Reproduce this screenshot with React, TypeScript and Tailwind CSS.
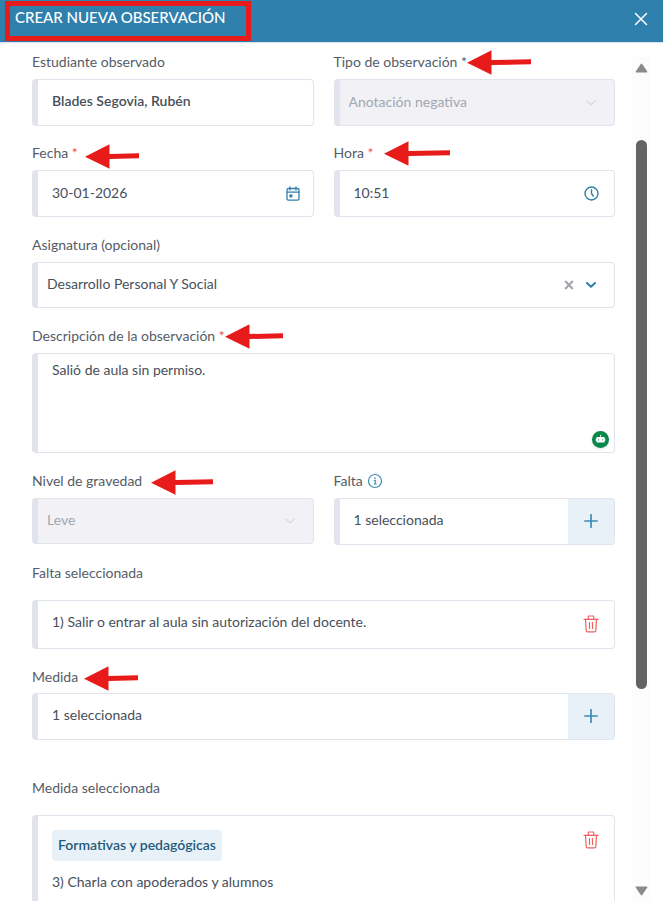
import { ReactNode, useState } from "react";
import clsx from "clsx";

const FIELD =
  "flex items-center overflow-hidden rounded-sm border border-l-[6px] border-[#e1e4ec]";

function Arrow({ length, className }: { length: number; className: string }) {
  return (
    <svg
      aria-hidden="true"
      width={length}
      height="25"
      viewBox={`0 0 ${length} 25`}
      className={clsx("absolute z-10", className)}
      fill="#e81b1b"
    >
      <path
        d={`M0 12.7 L24.5 0.3 V10 L${length} 9.2 V14.2 L24.5 15 V24.7 Z`}
      />
    </svg>
  );
}

function Label({
  htmlFor,
  children,
  required,
  arrow,
}: {
  htmlFor?: string;
  children: ReactNode;
  required?: boolean;
  arrow?: ReactNode;
}) {
  return (
    <div className="relative flex h-5 items-center gap-1">
      <label htmlFor={htmlFor} className="leading-5 text-[#555c68]">
        {children}
        {required && <span className="text-[#f0524f]"> *</span>}
      </label>
      {arrow}
    </div>
  );
}

function Chevron({ className }: { className: string }) {
  return (
    <svg
      aria-hidden="true"
      width="10"
      height="6"
      viewBox="0 0 10 6"
      className={clsx("pointer-events-none shrink-0", className)}
      fill="none"
      stroke="currentColor"
      strokeLinecap="round"
      strokeLinejoin="round"
    >
      <path d="M1 1 L5 4.8 L9 1" />
    </svg>
  );
}

function TrashIcon() {
  return (
    <svg
      aria-hidden="true"
      width="16"
      height="18"
      viewBox="0 0 16 18"
      fill="none"
      stroke="#f0605e"
      strokeWidth="1.2"
      strokeLinecap="round"
      strokeLinejoin="round"
    >
      <path d="M1 4.3 H15 M5.3 4.3 V1.6 Q5.3 1 5.9 1 H10.1 Q10.7 1 10.7 1.6 V4.3" />
      <path d="M2.5 4.3 L3.2 15.7 Q3.3 16.8 4.4 16.8 H11.6 Q12.7 16.8 12.8 15.7 L13.5 4.3" />
      <path d="M6.5 7.5 V13.5 M9.5 7.5 V13.5" />
    </svg>
  );
}

function CalendarIcon() {
  return (
    <svg
      aria-hidden="true"
      width="14"
      height="15"
      viewBox="0 0 14 15"
      fill="none"
      stroke="#2f80ad"
      strokeWidth="1.3"
      strokeLinecap="round"
    >
      <rect x="1" y="2.5" width="12" height="11.6" rx="1.4" />
      <path d="M1 6.2 H13 M4 0.8 V4 M10 0.8 V4" />
      <rect x="3.4" y="8.4" width="3" height="3" fill="#2f80ad" stroke="none" />
    </svg>
  );
}

function ClockIcon() {
  return (
    <svg
      aria-hidden="true"
      width="15"
      height="15"
      viewBox="0 0 15 15"
      fill="none"
      stroke="#2f80ad"
      strokeWidth="1.4"
      strokeLinecap="round"
    >
      <circle cx="7.5" cy="7.5" r="6.5" />
      <path d="M7.5 3.8 V7.5 L9.3 10" />
    </svg>
  );
}

function AddField({ id }: { id: string }) {
  return (
    <div className={clsx(FIELD, "h-[47px]")}>
      <input
        id={id}
        readOnly
        value="1 seleccionada"
        className="h-full min-w-0 flex-1 px-3.5 pb-1 outline-none"
      />
      <button
        type="button"
        aria-label="Agregar"
        className="flex h-full w-[46px] items-center justify-center bg-[#e8f1f7] pb-px"
      >
        <svg width="14" height="14" viewBox="0 0 14 14" stroke="#3e8ab5" strokeWidth="1.7" strokeLinecap="round">
          <path d="M7 0.8 V13.2 M0.8 7 H13.2" />
        </svg>
      </button>
    </div>
  );
}

function DisabledSelect({
  id,
  value,
  className,
}: {
  id: string;
  value: string;
  className: string;
}) {
  return (
    <div className={clsx(FIELD, "bg-[#f1f1f6] pr-[18px]", className)}>
      <select
        id={id}
        disabled
        className="h-full min-w-0 flex-1 appearance-none pb-0.5 pl-[9px] text-[#a3a7ae] opacity-100"
      >
        <option>{value}</option>
      </select>
      <Chevron className="text-[#dadee3] stroke-[1.6]" />
    </div>
  );
}

function Scrollbar() {
  return (
    <div aria-hidden="true" className="flex w-[19px] flex-col items-center bg-[#fcfcfc] pt-1.5 pb-[5px]">
      <svg width="13" height="10" viewBox="0 0 13 10" fill="#8a8a8a">
        <path d="M6.5 0.6 Q7 0.6 7.4 1.2 L12.3 8.4 Q12.8 9.5 11.6 9.6 H1.4 Q0.2 9.5 0.7 8.4 L5.6 1.2 Q6 0.6 6.5 0.6Z" />
      </svg>
      <div className="flex-[67]" />
      <div className="w-[11px] flex-[549] rounded-full bg-[#636363]" />
      <div className="flex-[197]" />
      <svg width="13" height="10" viewBox="0 0 13 10" fill="#8a8a8a">
        <path d="M6.5 9.4 Q6 9.4 5.6 8.8 L0.7 1.6 Q0.2 0.5 1.4 0.4 H11.6 Q12.8 0.5 12.3 1.6 L7.4 8.8 Q7 9.4 6.5 9.4Z" />
      </svg>
    </div>
  );
}

export default function App() {
  const [date, setDate] = useState("30-01-2026");
  const [time, setTime] = useState("10:51");
  const [description, setDescription] = useState("Salió de aula sin permiso.");

  return (
    <div className="flex h-screen flex-col overflow-hidden bg-white pb-[11px] font-['Lato',sans-serif] text-sm text-[#484f5b]">
      <header className="relative flex h-[43px] shrink-0 items-center justify-between border-b border-[#d5e3f0] bg-[#2f80ad] px-[15px] text-white">
        <h1 className="pb-2 text-[15px] leading-5 font-medium">
          CREAR NUEVA OBSERVACIÓN
        </h1>
        <div className="absolute top-px left-[5px] h-10 w-[246px] border-[5px] border-[#e81b1b]" />
        <button type="button" aria-label="Cerrar" className="pb-1">
          <svg width="14" height="14" viewBox="0 0 14 14" stroke="white" strokeWidth="1.5" strokeLinecap="round">
            <path d="M1.5 1.5 L12.5 12.5 M12.5 1.5 L1.5 12.5" />
          </svg>
        </button>
      </header>

      <div className="flex min-h-0 flex-1">
        <form className="flex min-w-0 flex-1 flex-col gap-[18px] overflow-hidden pt-[9px] pr-[17px] pl-8">
          <div className="grid shrink-0 grid-cols-2 gap-x-5 gap-y-[17px]">
            <div className="flex flex-col gap-[7px]">
              <Label htmlFor="student">Estudiante observado</Label>
              <div className={clsx(FIELD, "h-[47px]")}>
                <input
                  id="student"
                  readOnly
                  value="Blades Segovia, Rubén"
                  className="h-full min-w-0 flex-1 px-3.5 pb-1 font-semibold outline-none"
                />
              </div>
            </div>
            <div className="flex flex-col gap-[7px]">
              <Label
                htmlFor="type"
                arrow={<Arrow length={64} className="-top-0.5 left-[133px]" />}
              >
                Tipo de observación *
              </Label>
              <DisabledSelect id="type" value="Anotación negativa" className="h-[47px]" />
            </div>

            <div className="flex flex-col gap-[7px]">
              <Label
                htmlFor="date"
                required
                arrow={<Arrow length={54} className="top-px left-[53px]" />}
              >
                Fecha
              </Label>
              <div className={clsx(FIELD, "h-[47px] pr-[13px]")}>
                <input
                  id="date"
                  value={date}
                  onChange={(e) => setDate(e.target.value)}
                  className="h-full min-w-0 flex-1 px-3.5 pb-0.5 outline-none"
                />
                <button type="button" aria-label="Abrir calendario">
                  <CalendarIcon />
                </button>
              </div>
            </div>
            <div className="flex flex-col gap-[7px]">
              <Label
                htmlFor="time"
                required
                arrow={<Arrow length={66} className="-top-0.5 left-[50px]" />}
              >
                Hora
              </Label>
              <div className={clsx(FIELD, "h-[47px] pr-[15px]")}>
                <input
                  id="time"
                  value={time}
                  onChange={(e) => setTime(e.target.value)}
                  className="h-full min-w-0 flex-1 px-3.5 pb-0.5 outline-none"
                />
                <button type="button" aria-label="Elegir hora">
                  <ClockIcon />
                </button>
              </div>
            </div>
          </div>

          <div className="flex shrink-0 flex-col gap-[7px]">
            <Label htmlFor="subject">Asignatura (opcional)</Label>
            <div className={clsx(FIELD, "h-[46px] pr-[18px]")}>
              <select
                id="subject"
                className="h-full min-w-0 flex-1 appearance-none pb-0.5 pl-[9px] outline-none"
              >
                <option>Desarrollo Personal Y Social</option>
              </select>
              <button type="button" aria-label="Quitar asignatura" className="mr-3">
                <svg width="10" height="10" viewBox="0 0 10 10" stroke="#a0a3a9" strokeWidth="2">
                  <path d="M1.2 1 L8.8 9 M8.8 1 L1.2 9" />
                </svg>
              </button>
              <Chevron className="text-[#2f80ad] stroke-2" />
            </div>
          </div>

          <div className="flex shrink-0 flex-col gap-[7px]">
            <Label
              htmlFor="description"
              required
              arrow={<Arrow length={58} className="-top-0.5 left-[193px]" />}
            >
              Descripción de la observación
            </Label>
            <div className={clsx(FIELD, "relative h-[100px]")}>
              <textarea
                id="description"
                value={description}
                onChange={(e) => setDescription(e.target.value)}
                className="h-full min-w-0 flex-1 resize-none px-3.5 pt-1.5 leading-5 outline-none"
              />
              <button
                type="button"
                aria-label="Asistente"
                className="absolute right-[5px] bottom-1 flex size-[17px] items-center justify-center rounded-full bg-[#04894a] shadow-sm"
              >
                <svg width="11" height="11" viewBox="0 0 11 11" fill="white">
                  <path d="M5.1 1.4 L6.4 0.3 V1.3 L5.9 1.7 V3.2 H5.1Z" />
                  <rect x="1.5" y="3" width="8" height="5.6" rx="0.4" />
                  <rect x="0.7" y="4.6" width="9.6" height="2.4" rx="0.4" />
                  <circle cx="3.6" cy="5.8" r="0.6" fill="#04894a" />
                  <circle cx="7.4" cy="5.8" r="0.6" fill="#04894a" />
                </svg>
              </button>
            </div>
          </div>

          <div className="grid shrink-0 grid-cols-2 gap-x-5">
            <div className="flex flex-col gap-[7px]">
              <Label
                htmlFor="severity"
                arrow={<Arrow length={62} className="-top-px left-[119px]" />}
              >
                Nivel de gravedad
              </Label>
              <DisabledSelect id="severity" value="Leve" className="h-[46px]" />
            </div>
            <div className="flex flex-col gap-[7px]">
              <Label
                htmlFor="fault"
                arrow={
                  <svg width="16" height="16" viewBox="0 0 16 16" fill="none" stroke="#3e8ab5" strokeWidth="1.2">
                    <circle cx="8" cy="8" r="6.5" />
                    <path d="M6.8 7.4 H8.2 V11 M6.8 11 H9.5" />
                    <circle cx="8" cy="5.1" r="0.8" fill="#3e8ab5" stroke="none" />
                  </svg>
                }
              >
                Falta
              </Label>
              <AddField id="fault" />
            </div>
          </div>

          <div className="flex shrink-0 flex-col gap-[17px]">
            <h2 className="leading-5 text-[#555c68]">Falta seleccionada</h2>
            <div className={clsx(FIELD, "h-[49px] justify-between pr-[15px] pb-0.5 pl-3.5")}>
              <p className="pb-1">
                1) Salir o entrar al aula sin autorización del docente.
              </p>
              <button type="button" aria-label="Eliminar falta">
                <TrashIcon />
              </button>
            </div>
          </div>

          <div className="flex shrink-0 flex-col gap-1.5">
            <Label
              htmlFor="measure"
              arrow={<Arrow length={54} className="-top-px left-[52px]" />}
            >
              Medida
            </Label>
            <AddField id="measure" />
          </div>

          <div className="flex shrink-0 flex-col gap-[17px] pt-5">
            <h2 className="leading-5 text-[#555c68]">Medida seleccionada</h2>
            <div className={clsx(FIELD, "items-start justify-between pt-3.5 pr-[15px] pb-5 pl-3.5")}>
              <div>
                <span className="inline-flex h-[31px] items-center rounded-sm bg-[#e8f1f7] px-1.5 pb-0.5 font-semibold text-[#1f5b7c]">
                  Formativas y pedagógicas
                </span>
                <p className="pt-[11px] leading-5">3) Charla con apoderados y alumnos</p>
              </div>
              <button type="button" aria-label="Eliminar medida" className="pt-px">
                <TrashIcon />
              </button>
            </div>
          </div>
        </form>

        <div className="flex pt-3.5 pr-3">
          <Scrollbar />
        </div>
      </div>
    </div>
  );
}
